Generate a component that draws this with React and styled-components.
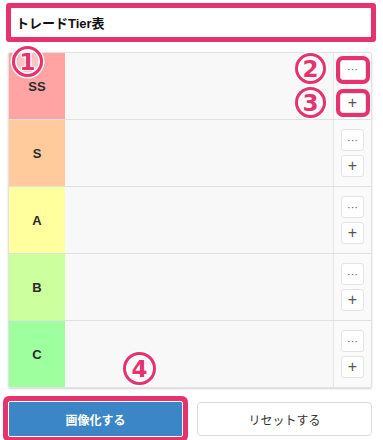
import React from "react";
import styled, { createGlobalStyle } from "styled-components";

const GlobalStyle = createGlobalStyle`
    body {
        margin: 0;
        background: #fff;
        font-family: "Liberation Sans", "Noto Sans CJK JP", sans-serif;
    }
`;

const PINK = "#e6336f";

const Page = styled.div`
    position: relative;
    width: 383px;
    height: 440px;
    padding: 3px 11px 0 8px;
    box-sizing: border-box;
    overflow: hidden;
`;

const TitleInput = styled.input`
    display: block;
    width: 370px;
    height: 39px;
    margin: 0 0 0 -2px;
    box-sizing: border-box;
    border: 5px solid ${PINK};
    border-radius: 3px;
    padding: 0 0 0 5px;
    font-family: "Liberation Sans", "Noto Sans CJK JP", sans-serif;
    font-size: 13px;
    font-weight: bold;
    color: #111;
    outline: none;
`;

const Table = styled.div`
    margin-top: 10px;
    border: 1px solid #e2e2e2;
    border-radius: 2px;
    box-shadow: 0 1px 2px rgba(0, 0, 0, 0.18);
    overflow: hidden;
`;

const Row = styled.div`
    display: grid;
    grid-template-columns: 56px 1fr 38px;
    height: 66px;
    border-bottom: 1px solid #e0e0e0;
    &:last-child {
        border-bottom: none;
    }
`;

const Label = styled.div`
    display: flex;
    align-items: center;
    justify-content: center;
    background: ${(p) => p.color};
    font-family: "Liberation Sans", sans-serif;
    font-weight: bold;
    font-size: 13px;
    color: #2a2a2a;
`;

const Items = styled.div`
    background: #f8f8f8;
`;

const Actions = styled.div`
    display: flex;
    flex-direction: column;
    align-items: center;
    justify-content: center;
    gap: ${(p) => (p.$marked ? "13px" : "4px")};
    background: #fafafa;
    border-left: 1px solid #e6e6e6;
`;

const SmallButton = styled.button`
    width: ${(p) => (p.$marked ? "26px" : "23px")};
    height: ${(p) => (p.$marked ? "20px" : "22px")};
    padding: 0;
    box-sizing: border-box;
    background: #fff;
    border: 1px solid #e4e4e4;
    border-radius: 3px;
    color: #555;
    font-family: "Liberation Sans", sans-serif;
    font-size: ${(p) => (p.$small ? "11px" : "16px")};
    line-height: 1;
    box-shadow: ${(p) => (p.$marked ? `0 0 0 4px ${PINK}` : "none")};
`;

const Footer = styled.div`
    display: grid;
    grid-template-columns: 1fr 1fr;
    gap: 14px;
    align-items: center;
    margin-top: 13px;
`;

const MainButton = styled.button`
    height: 36px;
    border: 1px solid #fff;
    border-radius: 2px;
    background: #3b86c6;
    color: #fff;
    font-family: "Noto Sans CJK JP", sans-serif;
    font-weight: bold;
    font-size: 12px;
    box-shadow: 0 0 0 5px ${PINK};
`;

const SubButton = styled.button`
    height: 34px;
    border: 1px solid #dcdcdc;
    border-radius: 4px;
    background: #fff;
    color: #333;
    font-family: "Noto Sans CJK JP", sans-serif;
    font-size: 12px;
`;

const Marker = styled.div`
    position: absolute;
    left: ${(p) => p.x}px;
    top: ${(p) => p.y}px;
    width: ${(p) => p.size}px;
    height: ${(p) => p.size}px;
    box-sizing: border-box;
    border-radius: 50%;
    border: 3.5px solid ${PINK};
    background: rgba(255, 255, 255, 0.35);
    box-shadow: 0 0 0 1.5px #fff, inset 0 0 0 1.5px #fff;
    display: flex;
    align-items: center;
    justify-content: center;
    font-family: "DejaVu Sans", sans-serif;
    font-weight: bold;
    font-size: 23px;
    color: ${PINK};
    text-shadow: 1px 0 0 #fff, -1px 0 0 #fff, 0 1px 0 #fff, 0 -1px 0 #fff,
        1px 1px 0 #fff, -1px -1px 0 #fff, 1px -1px 0 #fff, -1px 1px 0 #fff;
`;

const tiers = [
    { name: "SS", color: "#ffa3a3" },
    { name: "S", color: "#ffcb9c" },
    { name: "A", color: "#ffff9e" },
    { name: "B", color: "#ccff9e" },
    { name: "C", color: "#9eff9e" },
];

function App() {
    return (
        <Page>
            <GlobalStyle />
            <TitleInput defaultValue="トレードTier表" />
            <Table>
                {tiers.map((t, i) => (
                    <Row key={t.name}>
                        <Label color={t.color}>{t.name}</Label>
                        <Items />
                        <Actions $marked={i === 0}>
                            <SmallButton $small $marked={i === 0}>···</SmallButton>
                            <SmallButton $marked={i === 0}>+</SmallButton>
                        </Actions>
                    </Row>
                ))}
            </Table>
            <Footer>
                <MainButton>画像化する</MainButton>
                <SubButton>リセットする</SubButton>
            </Footer>
            <Marker x={12} y={46} size={31}>1</Marker>
            <Marker x={295} y={53} size={31}>2</Marker>
            <Marker x={295} y={87} size={31}>3</Marker>
            <Marker x={123} y={352} size={33}>4</Marker>
        </Page>
    );
}

export default App;
